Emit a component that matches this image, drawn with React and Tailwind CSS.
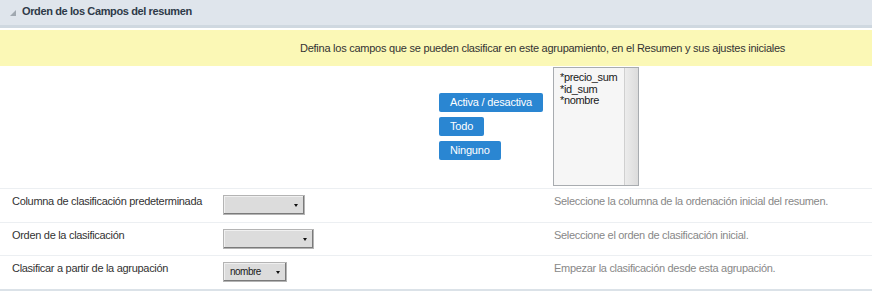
import React from "react";

const font = { fontFamily: '"Liberation Sans", Arial, sans-serif' };

function Select({ width, value }) {
  return (
    <div
      className="relative h-[20px] border border-[#b4b4b4] bg-[#dcdcdc] shadow-[inset_-1px_-1px_0_#7a7a7a,inset_1px_1px_0_#f0f0f0] flex items-center"
      style={{ width }}
    >
      {value ? (
        <span className="pl-[6px] text-[10px] text-[#1a1a1a] leading-none tracking-[-0.5px]">{value}</span>
      ) : null}
      <span className="absolute right-[6px] top-[8px] w-0 h-0 border-l-[2.5px] border-r-[2.5px] border-t-[3px] border-l-transparent border-r-transparent border-t-[#111]" />
    </div>
  );
}

function Row({ label, desc, select, h }) {
  return (
    <div className="border-t border-[#eceff2] grid grid-cols-[211px_331px_1fr] pl-[12px]" style={{ height: h }}>
      <div className="pt-[5px] text-[11px] leading-[14px] tracking-[-0.3px] text-[#333]">{label}</div>
      <div className="pt-[6px]">{select}</div>
      <div className="pt-[5px] text-[11px] leading-[14px] tracking-[-0.3px] text-[#888]">{desc}</div>
    </div>
  );
}

const btn =
  "self-start h-[19px] px-[11px] bg-[#2a86d2] text-white text-[11px] tracking-[-0.2px] rounded-[2px] leading-[19px]";

export default function App() {
  return (
    <div className="w-[872px] h-[294px] bg-white" style={font}>
      <div className="h-[25px] bg-[#dfe5ec] border-b-[3px] border-[#cfd8e0] box-content flex items-center">
        <span className="ml-[10px] w-0 h-0 border-l-[6px] border-l-transparent border-b-[6px] border-b-[#a0a8b0]" />
        <span className="ml-[6px] text-[11px] font-bold tracking-[-0.38px] text-[#2e3a48] -mt-[3px]">
          Orden de los Campos del resumen
        </span>
      </div>
      <div className="h-[2px]" />
      <div className="h-[36px] bg-[#fbf8b6] flex items-center pl-[300px] text-[11px] tracking-[-0.25px] text-[#333]">
        Defina los campos que se pueden clasificar en este agrupamiento, en el Resumen y sus ajustes iniciales
      </div>
      <div className="h-[122px] flex items-start pl-[439px] pt-[1px]">
        <div className="h-[119px] flex flex-col justify-center gap-[5px] mr-[10px]">
          <button className={btn}>Activa / desactiva</button>
          <button className={btn}>Todo</button>
          <button className={btn}>Ninguno</button>
        </div>
        <div className="w-[86px] h-[119px] border border-[#a8acb0] bg-[#f6f6f6] flex">
          <div className="flex-1 pl-[6px] pt-[4px] text-[11px] leading-[11.5px] tracking-[-0.35px] text-[#1a1a1a] overflow-hidden whitespace-nowrap">
            <div>*precio_sum</div>
            <div>*id_sum</div>
            <div>*nombre</div>
          </div>
          <div className="w-[14px] shrink-0 h-full border-l border-[#d0d0d0] bg-gradient-to-r from-[#ececec] to-[#dcdcdc]" />
        </div>
      </div>
      <Row
        h={34}
        label="Columna de clasificación predeterminada"
        desc="Seleccione la columna de la ordenación inicial del resumen."
        select={<Select width={82} />}
      />
      <Row
        h={33}
        label="Orden de la clasificación"
        desc="Seleccione el orden de clasificación inicial."
        select={<Select width={91} />}
      />
      <Row
        h={34}
        label="Clasificar a partir de la agrupación"
        desc="Empezar la clasificación desde esta agrupación."
        select={<Select width={64} value="nombre" />}
      />
      <div className="h-[2px] bg-[#dbe2e8]" />
    </div>
  );
}
